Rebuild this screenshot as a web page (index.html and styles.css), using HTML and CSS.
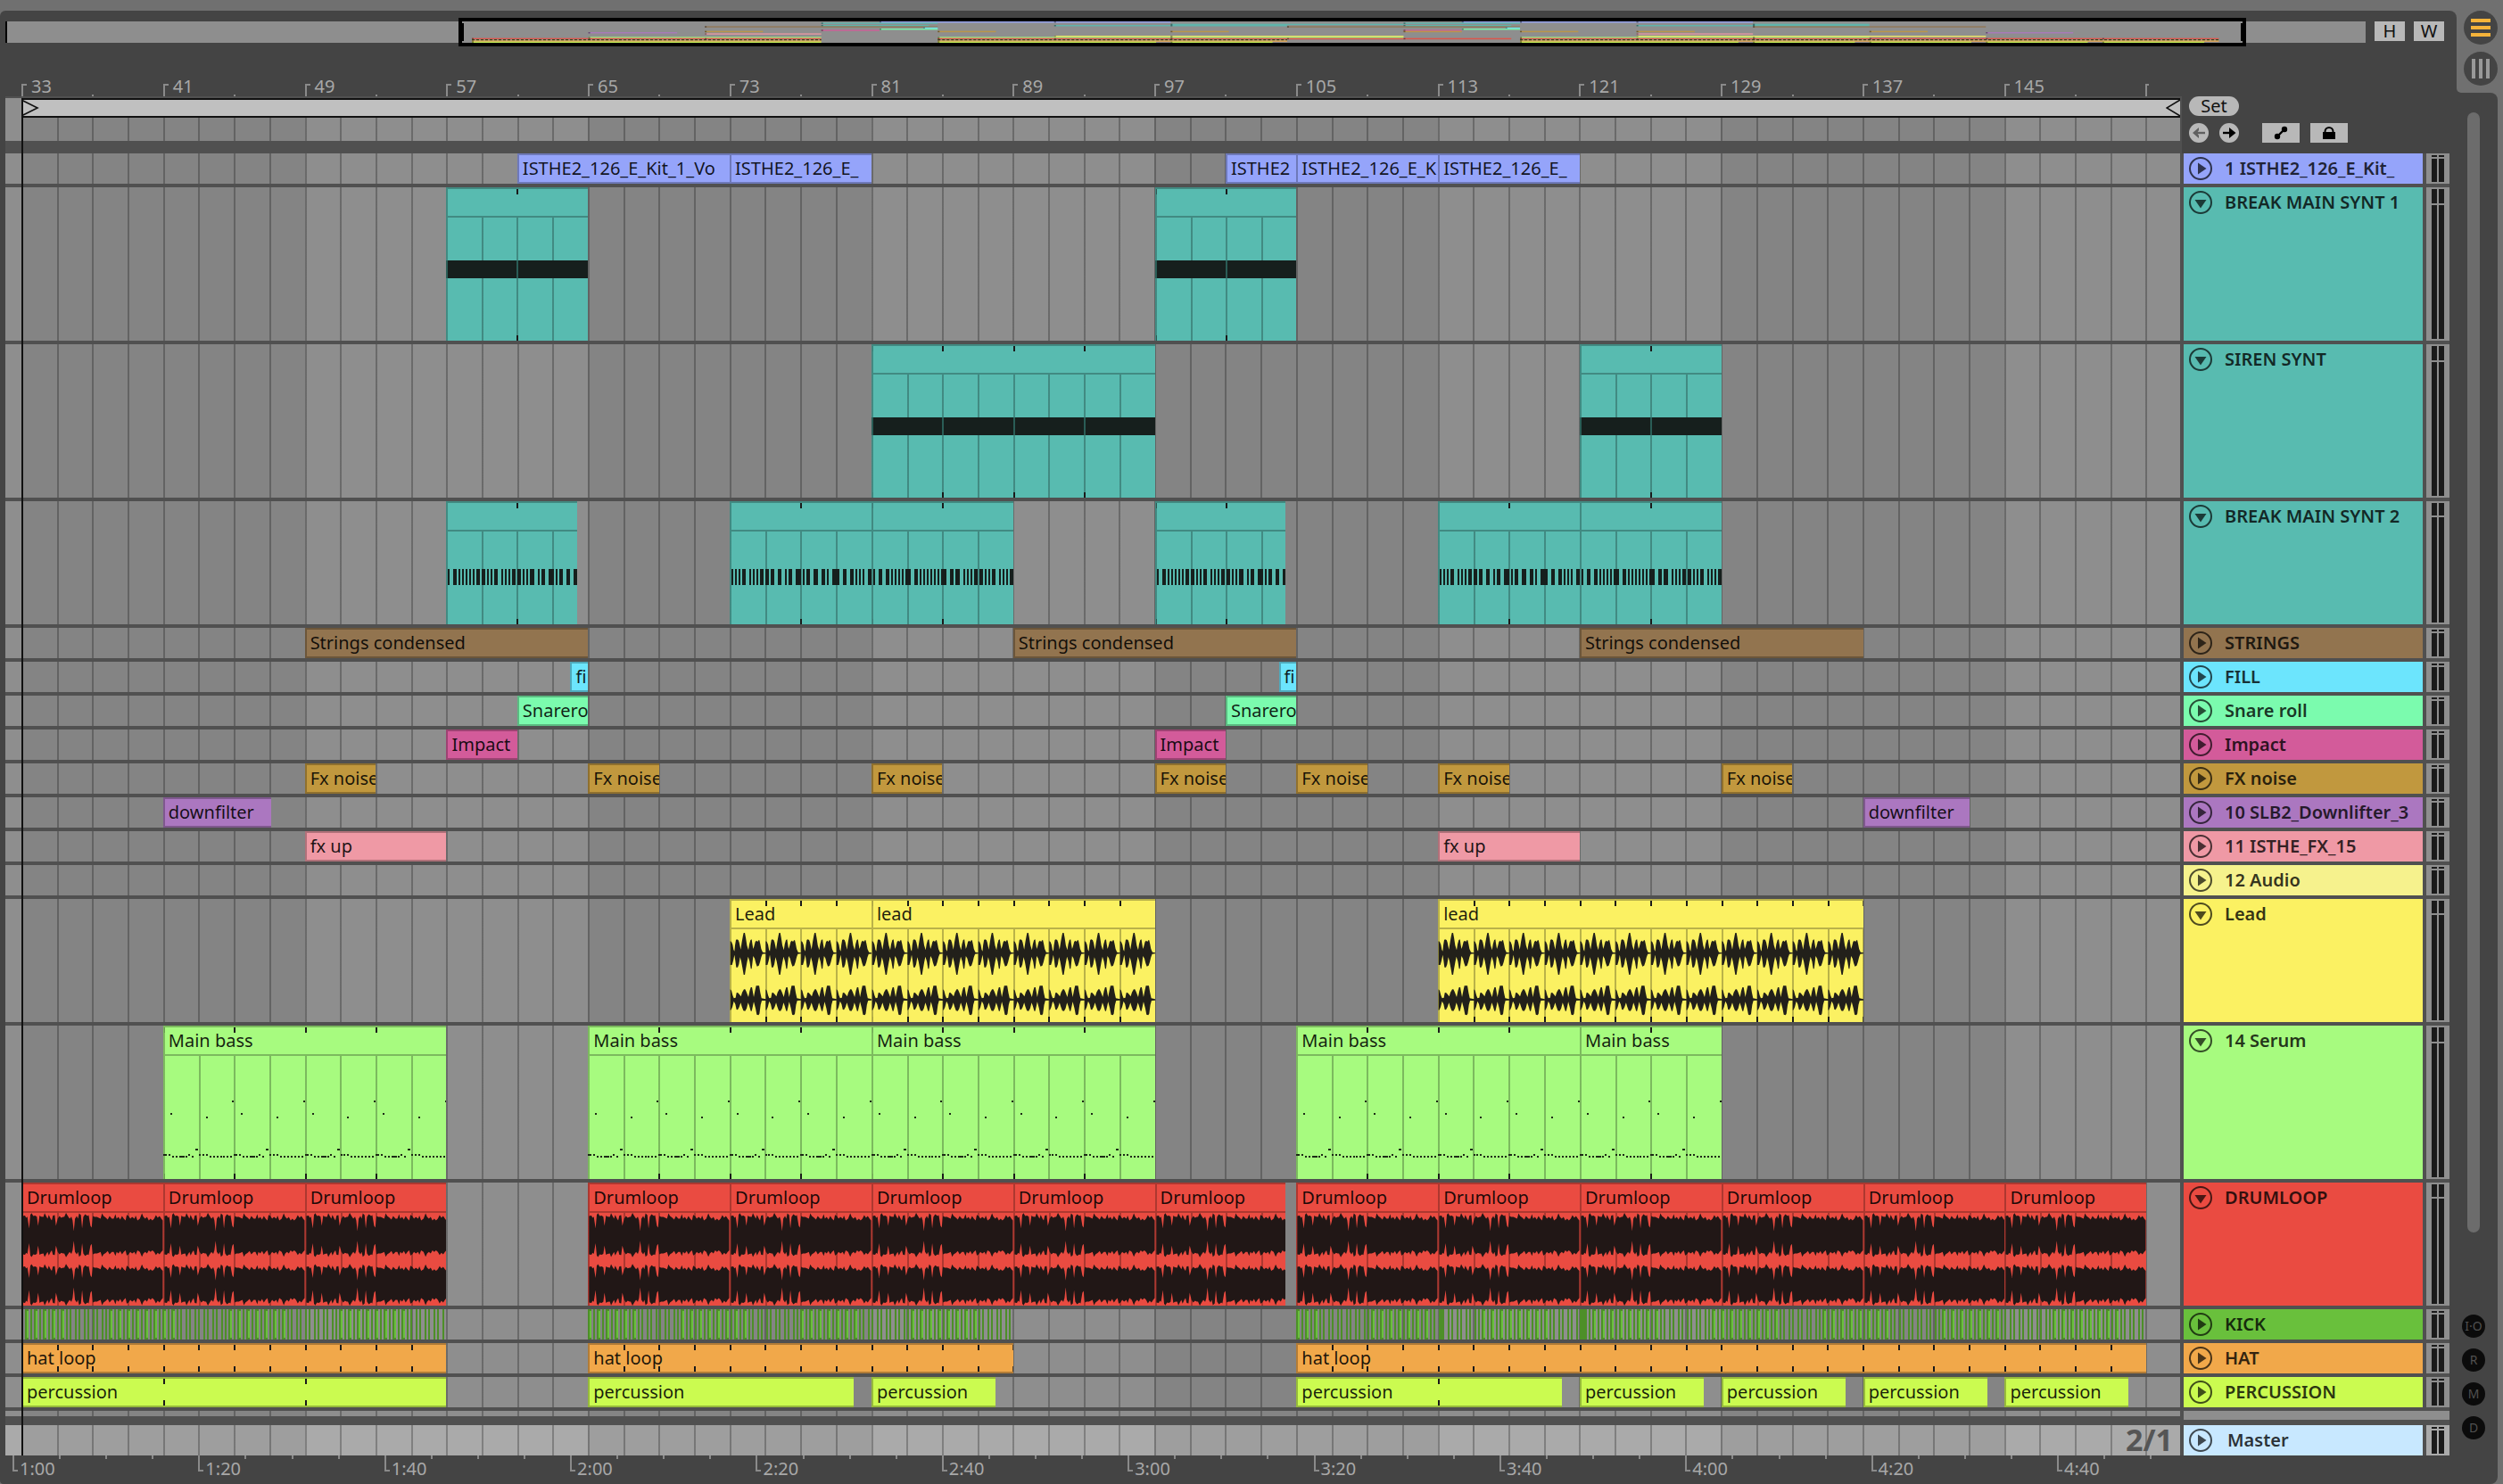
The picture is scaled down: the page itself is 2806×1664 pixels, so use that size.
FILE: index.html
```html
<!DOCTYPE html>
<html lang="en">
<head>
<meta charset="utf-8">
<title>Arrangement</title>
<meta name="viewport" content="width=device-width, initial-scale=1">
<link rel="stylesheet" href="styles.css">
</head>
<body>
<svg class="defs" width="0" height="0" aria-hidden="true">
  <symbol id="fold-closed" viewBox="0 0 26 26"><circle cx="13" cy="13" r="12" fill="none" stroke="currentColor" stroke-width="2"/><path d="M10 6.5 19.5 13 10 19.5z" fill="currentColor"/></symbol>
  <symbol id="fold-open" viewBox="0 0 26 26"><circle cx="13" cy="13" r="12" fill="none" stroke="currentColor" stroke-width="2"/><path d="M6.5 10h13L13 19.5z" fill="currentColor"/></symbol>
</svg>

<div class="app">
  <main class="workspace">
    <div class="overview-row">
      <div class="overview">
        <svg class="overview-map" viewBox="0 0 2644 24" preserveAspectRatio="none" aria-hidden="true"></svg>
        <div class="overview-frame"></div>
      </div>
      <button class="zoom-btn" type="button">H</button>
      <button class="zoom-btn" type="button">W</button>
    </div>

    <div class="bar-ruler">
      <span class="bar-mark">33</span><span class="bar-mark">41</span><span class="bar-mark">49</span><span class="bar-mark">57</span><span class="bar-mark">65</span><span class="bar-mark">73</span><span class="bar-mark">81</span><span class="bar-mark">89</span><span class="bar-mark">97</span><span class="bar-mark">105</span><span class="bar-mark">113</span><span class="bar-mark">121</span><span class="bar-mark">129</span><span class="bar-mark">137</span><span class="bar-mark">145</span><span class="bar-mark bar-mark-end"></span>
    </div>

    <div class="arrangement">
      <div class="head">
        <div class="locators">
          <div class="brace-row">
            <div class="brace">
              <svg width="20" height="18" viewBox="0 0 20 18"><path d="M0 0 18 9 0 18" fill="none" stroke="#111" stroke-width="1.6"/></svg>
              <svg width="16" height="18" viewBox="0 0 16 18"><path d="M16 0 1 9 16 18" fill="none" stroke="#111" stroke-width="1.6"/></svg>
            </div>
          </div>
          <div class="lane locator-lane"></div>
        </div>
        <div class="controls">
          <button class="set-btn" type="button">Set</button>
          <div class="control-row">
            <button class="nav-btn nav-btn-off" type="button" aria-label="Previous locator"><svg width="22" height="22" viewBox="0 0 22 22"><path d="M18 11H7" stroke="currentColor" stroke-width="2.4"/><path d="M4 11 11 5v3l-2 3 2 3v3z" fill="currentColor"/></svg></button>
            <button class="nav-btn" type="button" aria-label="Next locator"><svg width="22" height="22" viewBox="0 0 22 22"><path d="M4 11h11" stroke="currentColor" stroke-width="2.4"/><path d="M18.500 11 11 5v12z" fill="currentColor"/></svg></button>
            <button class="tool-btn tool-btn-first" type="button" aria-label="Automation"><svg width="42" height="22" viewBox="0 0 42 22"><path d="M17 15 25 7" stroke="#000" stroke-width="2.4"/><circle cx="17" cy="15" r="3.200"/><circle cx="25" cy="7" r="3.200"/></svg></button>
            <button class="tool-btn" type="button" aria-label="Lock envelopes"><svg width="42" height="22" viewBox="0 0 42 22"><path d="M14 10h14v8H14z"/><path d="M16.500 11V9.500a4.500 4.500 0 0 1 9 0V11" fill="none" stroke="#000" stroke-width="2"/></svg></button>
          </div>
        </div>
      </div>

      <div class="tracks">
        <section class="track periwinkle">
          <div class="lane">
            <div class="clip" style="--s:61;--e:73"><span>ISTHE2_126_E_Kit_1_Vo</span></div>
            <div class="clip" style="--s:73;--e:81"><span>ISTHE2_126_E_</span></div>
            <div class="clip" style="--s:101;--e:105"><span>ISTHE2</span></div>
            <div class="clip" style="--s:105;--e:113"><span>ISTHE2_126_E_K</span></div>
            <div class="clip" style="--s:113;--e:121"><span>ISTHE2_126_E_</span></div>
          </div>
          <header class="title"><button class="fold" type="button" aria-label="Unfold track"><svg><use href="#fold-closed"/></svg></button><h2>1 ISTHE2_126_E_Kit_</h2></header>
          <div class="meter"></div>
        </section>

        <section class="track large teal">
          <div class="lane">
            <div class="clip loop-4" style="--s:57;--e:65"><span></span><div class="body sustain"></div></div>
            <div class="clip loop-4" style="--s:97;--e:105"><span></span><div class="body sustain"></div></div>
          </div>
          <header class="title"><button class="fold" type="button" aria-label="Fold track"><svg><use href="#fold-open"/></svg></button><h2>BREAK MAIN SYNT 1</h2></header>
          <div class="meter"></div>
        </section>

        <section class="track large teal">
          <div class="lane">
            <div class="clip loop-4" style="--s:81;--e:97"><span></span><div class="body sustain"></div></div>
            <div class="clip loop-4" style="--s:121;--e:129"><span></span><div class="body sustain"></div></div>
          </div>
          <header class="title"><button class="fold" type="button" aria-label="Fold track"><svg><use href="#fold-open"/></svg></button><h2>SIREN SYNT</h2></header>
          <div class="meter"></div>
        </section>

        <section class="track medium teal">
          <div class="lane">
            <div class="clip loop-4" style="--s:57;--e:64.4"><span></span><div class="body" data-draw="riff" data-riff="0"></div></div>
            <div class="clip loop-4" style="--s:73;--e:81"><span></span><div class="body" data-draw="riff" data-riff="1"></div></div>
            <div class="clip loop-4" style="--s:81;--e:89"><span></span><div class="body" data-draw="riff" data-riff="2"></div></div>
            <div class="clip loop-4" style="--s:97;--e:104.4"><span></span><div class="body" data-draw="riff" data-riff="0"></div></div>
            <div class="clip loop-4" style="--s:113;--e:121"><span></span><div class="body" data-draw="riff" data-riff="1"></div></div>
            <div class="clip loop-4" style="--s:121;--e:129"><span></span><div class="body" data-draw="riff" data-riff="2"></div></div>
          </div>
          <header class="title"><button class="fold" type="button" aria-label="Fold track"><svg><use href="#fold-open"/></svg></button><h2>BREAK MAIN SYNT 2</h2></header>
          <div class="meter"></div>
        </section>

        <section class="track brown">
          <div class="lane">
            <div class="clip" style="--s:49;--e:65"><span>Strings condensed</span></div>
            <div class="clip" style="--s:89;--e:105"><span>Strings condensed</span></div>
            <div class="clip" style="--s:121;--e:137"><span>Strings condensed</span></div>
          </div>
          <header class="title"><button class="fold" type="button" aria-label="Unfold track"><svg><use href="#fold-closed"/></svg></button><h2>STRINGS</h2></header>
          <div class="meter"></div>
        </section>

        <section class="track cyan">
          <div class="lane">
            <div class="clip" style="--s:64;--e:65"><span>fi</span></div>
            <div class="clip" style="--s:104;--e:105"><span>fi</span></div>
          </div>
          <header class="title"><button class="fold" type="button" aria-label="Unfold track"><svg><use href="#fold-closed"/></svg></button><h2>FILL</h2></header>
          <div class="meter"></div>
        </section>

        <section class="track mint">
          <div class="lane">
            <div class="clip" style="--s:61;--e:65"><span>Snarero</span></div>
            <div class="clip" style="--s:101;--e:105"><span>Snarero</span></div>
          </div>
          <header class="title"><button class="fold" type="button" aria-label="Unfold track"><svg><use href="#fold-closed"/></svg></button><h2>Snare roll</h2></header>
          <div class="meter"></div>
        </section>

        <section class="track magenta">
          <div class="lane">
            <div class="clip" style="--s:57;--e:61"><span>Impact</span></div>
            <div class="clip" style="--s:97;--e:101"><span>Impact</span></div>
          </div>
          <header class="title"><button class="fold" type="button" aria-label="Unfold track"><svg><use href="#fold-closed"/></svg></button><h2>Impact</h2></header>
          <div class="meter"></div>
        </section>

        <section class="track gold">
          <div class="lane">
            <div class="clip" style="--s:49;--e:53"><span>Fx noise</span></div>
            <div class="clip" style="--s:65;--e:69"><span>Fx noise</span></div>
            <div class="clip" style="--s:81;--e:85"><span>Fx noise</span></div>
            <div class="clip" style="--s:97;--e:101"><span>Fx noise</span></div>
            <div class="clip" style="--s:105;--e:109"><span>Fx noise</span></div>
            <div class="clip" style="--s:113;--e:117"><span>Fx noise</span></div>
            <div class="clip" style="--s:129;--e:133"><span>Fx noise</span></div>
          </div>
          <header class="title"><button class="fold" type="button" aria-label="Unfold track"><svg><use href="#fold-closed"/></svg></button><h2>FX noise</h2></header>
          <div class="meter"></div>
        </section>

        <section class="track purple">
          <div class="lane">
            <div class="clip" style="--s:41;--e:47.100"><span>downfilter</span></div>
            <div class="clip" style="--s:137;--e:143"><span>downfilter</span></div>
          </div>
          <header class="title"><button class="fold" type="button" aria-label="Unfold track"><svg><use href="#fold-closed"/></svg></button><h2>10 SLB2_Downlifter_3</h2></header>
          <div class="meter"></div>
        </section>

        <section class="track pink">
          <div class="lane">
            <div class="clip" style="--s:49;--e:57"><span>fx up</span></div>
            <div class="clip" style="--s:113;--e:121"><span>fx up</span></div>
          </div>
          <header class="title"><button class="fold" type="button" aria-label="Unfold track"><svg><use href="#fold-closed"/></svg></button><h2>11 ISTHE_FX_15</h2></header>
          <div class="meter"></div>
        </section>

        <section class="track cream">
          <div class="lane"></div>
          <header class="title"><button class="fold" type="button" aria-label="Unfold track"><svg><use href="#fold-closed"/></svg></button><h2>12 Audio</h2></header>
          <div class="meter"></div>
        </section>

        <section class="track medium yellow">
          <div class="lane">
            <div class="clip loop-2" style="--s:73;--e:81"><span>Lead</span><div class="body" data-draw="lead"></div></div>
            <div class="clip loop-2" style="--s:81;--e:97"><span>lead</span><div class="body" data-draw="lead"></div></div>
            <div class="clip loop-2" style="--s:113;--e:137"><span>lead</span><div class="body" data-draw="lead"></div></div>
          </div>
          <header class="title"><button class="fold" type="button" aria-label="Fold track"><svg><use href="#fold-open"/></svg></button><h2>Lead</h2></header>
          <div class="meter"></div>
        </section>

        <section class="track large green">
          <div class="lane">
            <div class="clip loop-4" style="--s:41;--e:57"><span>Main bass</span><div class="body" data-draw="bass"></div></div>
            <div class="clip loop-4" style="--s:65;--e:81"><span>Main bass</span><div class="body" data-draw="bass"></div></div>
            <div class="clip loop-4" style="--s:81;--e:97"><span>Main bass</span><div class="body" data-draw="bass"></div></div>
            <div class="clip loop-4" style="--s:105;--e:121"><span>Main bass</span><div class="body" data-draw="bass"></div></div>
            <div class="clip loop-4" style="--s:121;--e:129"><span>Main bass</span><div class="body" data-draw="bass"></div></div>
          </div>
          <header class="title"><button class="fold" type="button" aria-label="Fold track"><svg><use href="#fold-open"/></svg></button><h2>14 Serum</h2></header>
          <div class="meter"></div>
        </section>

        <section class="track medium red">
          <div class="lane">
            <div class="clip" style="--s:33;--e:41"><span>Drumloop</span><div class="body" data-draw="drums"></div></div>
            <div class="clip" style="--s:41;--e:49"><span>Drumloop</span><div class="body" data-draw="drums"></div></div>
            <div class="clip" style="--s:49;--e:57"><span>Drumloop</span><div class="body" data-draw="drums"></div></div>
            <div class="clip" style="--s:65;--e:73"><span>Drumloop</span><div class="body" data-draw="drums"></div></div>
            <div class="clip" style="--s:73;--e:81"><span>Drumloop</span><div class="body" data-draw="drums"></div></div>
            <div class="clip" style="--s:81;--e:89"><span>Drumloop</span><div class="body" data-draw="drums"></div></div>
            <div class="clip" style="--s:89;--e:97"><span>Drumloop</span><div class="body" data-draw="drums"></div></div>
            <div class="clip" style="--s:97;--e:104.4"><span>Drumloop</span><div class="body" data-draw="drums"></div></div>
            <div class="clip" style="--s:105;--e:113"><span>Drumloop</span><div class="body" data-draw="drums"></div></div>
            <div class="clip" style="--s:113;--e:121"><span>Drumloop</span><div class="body" data-draw="drums"></div></div>
            <div class="clip" style="--s:121;--e:129"><span>Drumloop</span><div class="body" data-draw="drums"></div></div>
            <div class="clip" style="--s:129;--e:137"><span>Drumloop</span><div class="body" data-draw="drums"></div></div>
            <div class="clip" style="--s:137;--e:145"><span>Drumloop</span><div class="body" data-draw="drums"></div></div>
            <div class="clip" style="--s:145;--e:153"><span>Drumloop</span><div class="body" data-draw="drums"></div></div>
          </div>
          <header class="title"><button class="fold" type="button" aria-label="Fold track"><svg><use href="#fold-open"/></svg></button><h2>DRUMLOOP</h2></header>
          <div class="meter"></div>
        </section>

        <section class="track leaf">
          <div class="lane">
            <div class="kicks" style="--s:33;--e:57"></div>
            <div class="kicks" style="--s:65;--e:89"></div>
            <div class="kicks" style="--s:105;--e:153"></div>
          </div>
          <header class="title"><button class="fold" type="button" aria-label="Unfold track"><svg><use href="#fold-closed"/></svg></button><h2>KICK</h2></header>
          <div class="meter"></div>
        </section>

        <section class="track orange">
          <div class="lane">
            <div class="clip loop-2" style="--s:33;--e:57"><span>hat loop</span></div>
            <div class="clip loop-2" style="--s:65;--e:89"><span>hat loop</span></div>
            <div class="clip loop-2" style="--s:105;--e:153"><span>hat loop</span></div>
          </div>
          <header class="title"><button class="fold" type="button" aria-label="Unfold track"><svg><use href="#fold-closed"/></svg></button><h2>HAT</h2></header>
          <div class="meter"></div>
        </section>

        <section class="track lime">
          <div class="lane">
            <div class="clip loop-8" style="--s:33;--e:57"><span>percussion</span></div>
            <div class="clip" style="--s:65;--e:80"><span>percussion</span></div>
            <div class="clip" style="--s:81;--e:88"><span>percussion</span></div>
            <div class="clip loop-8" style="--s:105;--e:120"><span>percussion</span></div>
            <div class="clip" style="--s:121;--e:128"><span>percussion</span></div>
            <div class="clip" style="--s:129;--e:136"><span>percussion</span></div>
            <div class="clip" style="--s:137;--e:144"><span>percussion</span></div>
            <div class="clip" style="--s:145;--e:152"><span>percussion</span></div>
          </div>
          <header class="title"><button class="fold" type="button" aria-label="Unfold track"><svg><use href="#fold-closed"/></svg></button><h2>PERCUSSION</h2></header>
          <div class="meter"></div>
        </section>

        <div class="drop-area"><div class="lane"></div><div class="drop-side"></div></div>

        <section class="track master">
          <div class="lane"><span class="grid-size">2/1</span></div>
          <header class="title"><button class="fold" type="button" aria-label="Unfold track"><svg><use href="#fold-closed"/></svg></button><h2>Master</h2></header>
          <div class="meter"></div>
        </section>
      </div>
      <div class="playhead"></div>
    </div>

    <div class="time-ruler">
      <span class="time-mark">1:00</span><span class="time-mark">1:20</span><span class="time-mark">1:40</span><span class="time-mark">2:00</span><span class="time-mark">2:20</span><span class="time-mark">2:40</span><span class="time-mark">3:00</span><span class="time-mark">3:20</span><span class="time-mark">3:40</span><span class="time-mark">4:00</span><span class="time-mark">4:20</span><span class="time-mark">4:40</span>
    </div>
  </main>

  <aside class="rail">
    <div class="views-wrap">
      <nav class="views">
        <button class="view-btn view-btn-on" type="button" aria-label="Arrangement view"><svg width="38" height="38" viewBox="0 0 38 38"><path d="M8 9h22v4H8zM8 17h22v4H8zM8 25h22v4H8z" fill="currentColor"/></svg></button>
        <button class="view-btn" type="button" aria-label="Session view"><svg width="38" height="38" viewBox="0 0 38 38"><path d="M9 8h4v22H9zM17 8h4v22h-4zM25 8h4v22h-4z" fill="currentColor"/></svg></button>
      </nav>
    </div>
    <div class="rail-body">
      <div class="scroll-thumb"></div>
      <div class="sections">
        <button class="section-btn" type="button">I·O</button>
        <button class="section-btn" type="button">R</button>
        <button class="section-btn" type="button">M</button>
        <button class="section-btn" type="button">D</button>
      </div>
    </div>
  </aside>
</div>
<script src="script.js"></script>
</body>
</html>
```

FILE: styles.css
```css
* { box-sizing: border-box; }

:root {
  --panel: #444;
  --gap-bg: #505050;
  --lane: #8e8e8e;
  --lane-alt: #848484;
  --frame: #707070;
  --ink: #1a1a1a;
  --tick: #8a8a8a;
}

body {
  margin: 0;
  background: var(--frame);
  color: #111;
  font: 20px/28px "Noto Sans", "Open Sans", sans-serif;
}

button { margin: 0; padding: 0; border: 0; font: inherit; color: inherit; }
button svg { display: block; }
.defs { position: absolute; }

.app { display: flex; min-height: 100vh; padding-top: 12px; }

.workspace {
  flex: 1;
  min-width: 0;
  padding: 12px 8px 0 6px;
  background: var(--panel);
  border-radius: 6px 8px 0 4px;
}

/* Overview strip */
.overview-row { display: flex; gap: 10px; padding-right: 6px; }
.overview { position: relative; flex: 1; height: 24px; background: var(--lane); border-left: 2px solid #000; }
.overview-map { display: block; width: 100%; height: 24px; }
.overview-frame { position: absolute; inset: -4px 5.05% -4px 19.15%; border: 4px solid #000; }
.overview-frame::before { content: ""; position: absolute; inset: 2px 0; border: solid #000; border-width: 0 2px; }
.zoom-btn { width: 34px; height: 22px; background: #b8b8b8; line-height: 22px; }

/* Bar ruler */
.bar-ruler {
  display: flex;
  height: 60px;
  margin-right: 302px;
  padding-left: 18px;
  overflow: hidden;
  background: repeating-linear-gradient(90deg, var(--tick) 0 2px, transparent 2px calc(400% / 121.945)) left bottom / 100% 2px no-repeat content-box;
  background-origin: content-box;
}
.bar-mark {
  flex: 0 0 calc(800% / 121.945);
  display: flex;
  align-items: flex-end;
  gap: 5px;
  line-height: 22px;
  color: #a8a8a8;
}
.bar-mark::before { content: ""; width: 4px; height: 12px; border: solid var(--tick); border-width: 2px 0 0 2px; }
.bar-mark-end::before { width: 2px; }

/* Locators and controls */
.arrangement { position: relative; }
.head, .track { display: grid; grid-template-columns: minmax(0, 1fr) 268px 26px; column-gap: 4px; }
.locators { background: var(--gap-bg); margin-right: -2px; padding: 2px 2px 14px 0; }
.brace-row { padding-left: 18px; background: var(--lane); }
.brace { display: flex; justify-content: space-between; height: 22px; background: #c0c0c0; border: solid #111; border-width: 2px 0; }
.controls { padding-left: 6px; display: flex; flex-direction: column; align-items: flex-start; gap: 8px; }
.set-btn { width: 56px; height: 22px; border-radius: 11px; background: #b8b8b8; line-height: 22px; }
.control-row { display: flex; gap: 12px; }
.nav-btn { width: 22px; height: 22px; border-radius: 50%; background: #b8b8b8; color: #000; }
.nav-btn-off { color: #606060; }
.tool-btn { width: 42px; height: 22px; background: #b8b8b8; }
.tool-btn-first { margin-left: 14px; }

/* Tracks */
.tracks { display: grid; row-gap: 4px; background: var(--gap-bg); }
.track { --h: 34px; --peak: 2px; height: var(--h); }
.medium { --h: 138px; --peak: 14px; }
.large { --h: 172px; --peak: 16px; }

.lane {
  container-type: inline-size;
  display: grid;
  grid-template-columns: repeat(1219, minmax(0, 1fr));
  grid-template-rows: 100%;
  min-width: 0;
  padding-left: 18px;
  overflow: hidden;
  background:
    repeating-linear-gradient(90deg, #00000040 0 2px, transparent 2px calc(200% / 121.945)),
    repeating-linear-gradient(90deg, var(--lane-alt) 0 calc(1600% / 121.945), var(--lane) calc(1600% / 121.945) calc(3200% / 121.945));
  background-origin: content-box;
  background-repeat: no-repeat;
  background-color: var(--lane);
}
.locator-lane { height: 26px; }

.title { display: flex; align-items: flex-start; gap: 14px; min-width: 0; padding: 4px 0 0 6px; background: var(--c); overflow: hidden; }
.title h2 { margin: 0; font-size: 20px; font-weight: 600; line-height: 26px; white-space: nowrap; color: #000000cc; }
.fold { flex: none; background: none; color: #000000b0; }
.fold svg { width: 26px; height: 26px; }

.meter { display: flex; gap: 2px; padding: 2px 6px; background: var(--lane); }
.meter::before, .meter::after {
  content: "";
  width: 6px;
  background: linear-gradient(var(--ink) 0 var(--peak), transparent var(--peak) calc(var(--peak) + 2px), var(--ink) calc(var(--peak) + 2px));
}

/* Clips */
.clip, .kicks {
  --bar: calc(100cqw / 121.945);
  --edge: color-mix(in srgb, var(--c) 74%, black);
  grid-row: 1;
  grid-column: calc((var(--s) - 33) * 10 + 1) / calc((var(--e) - 33) * 10 + 1);
  min-width: 0;
  overflow: hidden;
}
.clip {
  border: solid var(--edge);
  border-width: 2px 0 2px 2px;
  background-color: var(--c);
  background-clip: padding-box;
}
.clip > span { display: block; height: 30px; padding-left: 4px; line-height: 30px; white-space: nowrap; overflow: hidden; color: #000000e0; }
.medium .clip, .large .clip { display: flex; flex-direction: column; border-width: 2px 0 0; }
.medium .clip > span, .large .clip > span { flex: none; height: 32px; border: solid var(--edge); border-width: 0 0 2px 2px; }

.loop-2 { --loop: calc(var(--bar) * 2); }
.loop-4 { --loop: calc(var(--bar) * 4); }
.loop-8 { --loop: calc(var(--bar) * 8); }
.loop-2, .loop-4, .loop-8 { position: relative; }
.loop-2::after, .loop-4::after, .loop-8::after {
  content: "";
  position: absolute;
  inset: 0 0 0 -2px;
  background:
    repeating-linear-gradient(90deg, var(--ink) 0 2px, transparent 2px var(--loop)) left top / 100% 6px no-repeat,
    repeating-linear-gradient(90deg, var(--ink) 0 2px, transparent 2px var(--loop)) left bottom / 100% 6px no-repeat;
  clip-path: inset(0 0 0 2px);
}
.medium .clip::after, .large .clip::after { left: 0; }

.body {
  flex: 1;
  overflow: hidden;
  background: repeating-linear-gradient(90deg, var(--edge) 0 2px, transparent 2px calc(var(--bar) * 2));
}
.body svg, .kicks svg { display: block; height: 100%; }
.sustain {
  background:
    repeating-linear-gradient(90deg, #2a5d56 0 2px, transparent 2px calc(var(--bar) * 4)) 0 48px / 100% 20px no-repeat,
    linear-gradient(#161f1d, #161f1d) 0 48px / 100% 20px no-repeat,
    repeating-linear-gradient(90deg, var(--edge) 0 2px, transparent 2px calc(var(--bar) * 2));
}

.periwinkle { --c: #95a4fa; }
.teal { --c: #58bbb0; }
.brown { --c: #92744f; }
.cyan { --c: #6ce5fd; }
.mint { --c: #7bfbae; }
.magenta { --c: #d35b9a; }
.gold { --c: #c1983e; }
.purple { --c: #ab77c0; }
.pink { --c: #ef99a5; }
.cream { --c: #f6f28d; }
.yellow { --c: #fbf162; }
.green { --c: #a7fb7f; }
.red { --c: #ea4b41; }
.leaf { --c: #69c03c; }
.orange { --c: #f1a84a; }
.lime { --c: #cbfb50; }
.master { --c: #c8e8ff; --lane: #aaa; --lane-alt: #9e9e9e; }
.master .title { gap: 17px; }

.drop-area { display: grid; grid-template-columns: minmax(0, 1fr) 298px; column-gap: 4px; margin-bottom: 2px; }
.drop-area .lane { height: 6px; }
.drop-side { height: 10px; background: var(--lane); }

.grid-size { grid-column: 1 / -1; justify-self: end; padding-right: 8px; font-size: 34px; font-weight: 700; line-height: 32px; color: #555; }

.playhead { position: absolute; top: 2px; bottom: 0; left: 18px; width: 2px; background: #111; }

/* Time ruler */
.time-ruler {
  display: flex;
  height: 32px;
  margin-right: 302px;
  padding-left: 8px;
  overflow: hidden;
  background: repeating-linear-gradient(90deg, var(--tick) 0 2px, transparent 2px calc(100% / 46.648)) left top / 100% 4px no-repeat content-box;
  background-origin: content-box;
}
.time-mark { flex: 0 0 calc(100% / 11.662); display: flex; gap: 2px; line-height: 30px; color: #a8a8a8; }
.time-mark::before { content: ""; flex: none; width: 4px; height: 16px; border: solid var(--tick); border-width: 0 0 2px 2px; }

/* Right rail */
.rail { flex: none; width: 52px; display: flex; flex-direction: column; }
.views-wrap { background: linear-gradient(90deg, var(--panel) 8px, var(--frame) 8px); }
.views { height: 92px; padding-left: 8px; display: flex; flex-direction: column; gap: 8px; background: var(--frame); border-bottom-left-radius: 5px; }
.view-btn { width: 38px; height: 38px; border-radius: 50%; background: var(--panel); color: #999; }
.view-btn-on { color: #f5b33a; }
.rail-body { flex: 1; display: flex; flex-direction: column; width: 46px; padding: 22px 14px 50px 6px; background: var(--panel); border-radius: 0 8px 8px 0; }
.scroll-thumb { flex: 1; max-height: 1256px; width: 14px; margin: 0 6px; border-radius: 7px; background: #6c6c6c; }
.sections { display: grid; gap: 12px; margin-top: auto; }
.section-btn { width: 26px; height: 26px; border-radius: 50%; background: #0b0b0b; color: #505050; font-size: 14px; line-height: 26px; text-align: center; }
```

FILE: script.js
```js
const NS = 'http://www.w3.org/2000/svg';
const VISIBLE_BARS = 121.945;

function el(name, attrs, parent) {
  const node = document.createElementNS(NS, name);
  for (const key in attrs) node.setAttribute(key, attrs[key]);
  if (parent) parent.append(node);
  return node;
}

const span = node => ({
  start: parseFloat(node.style.getPropertyValue('--s')),
  end: parseFloat(node.style.getPropertyValue('--e'))
});

/* Lead: two channels, one phrase is 119 units wide (two bars) and the body is 312 units high. */
const LEAD = [
  [[0,40],[4,42],[8,52],[11,68],[14,74],[16,54],[19,36],[22,34],[27,36],[30,44],[35,68],[39,42],[43,20],[45,12],[49,12],[52,28],[56,54],[61,70],[64,50],[68,36],[72,34],[74,48],[77,66],[80,58],[84,42],[88,38],[92,42],[95,37],[98,37],[101,50],[104,66],[109,77],[119,79],
   [119,82],[108,83],[104,94],[100,110],[96,122],[90,125],[86,114],[82,98],[77,90],[74,116],[72,133],[69,133],[65,108],[60,92],[56,112],[52,134],[49,153],[45,153],[41,130],[37,108],[33,94],[29,118],[25,128],[20,128],[17,106],[14,86],[10,106],[6,120],[0,120]],
  [[0,202],[4,206],[8,222],[12,232],[18,230],[21,214],[25,213],[30,218],[36,226],[40,212],[46,202],[50,202],[54,210],[61,228],[65,208],[69,195],[73,195],[79,228],[83,208],[87,190],[97,190],[101,214],[105,232],[119,235],
   [119,239],[106,240],[102,254],[98,284],[95,289],[89,287],[85,266],[79,244],[76,258],[72,275],[69,275],[64,258],[60,247],[55,266],[50,275],[44,274],[39,260],[35,247],[30,262],[25,271],[21,270],[17,252],[12,242],[7,262],[3,271],[0,272]]
];

/* Drum loop: upper envelope, 471 units wide (eight bars). */
const DRUMS = [0,18,8,15,12,28,16,21,22,58,26,11,30,1,36,18,42,15,48,21,52,48,57,15,62,21,70,23,74,1,79,18,84,33,88,11,94,33,98,43,102,15,108,13,112,48,118,33,124,17,130,28,136,23,140,23,146,0,152,18,158,33,164,21,168,43,172,68,176,33,182,18,186,33,190,3,196,13,200,58,204,23,210,8,218,18,222,13,228,48,232,55,236,18,242,23,250,23,256,28,262,33,267,3,272,18,280,28,286,38,292,18,300,33,306,33,312,8,316,33,322,23,328,38,334,18,340,33,346,43,350,11,356,18,362,33,368,23,376,33,380,15,386,43,394,33,401,3,406,23,412,33,418,23,424,43,430,33,436,43,442,33,448,13,454,28,460,18,466,33,471,43];

/* Note cells of the synth riffs, 79 cells to eight bars. */
const RIFFS = [
  [0,3,4,6,8,10,12,14,16,17,19,20,22,24,26,27,30,32,34,36,37,39,40,42,44,46,47,50,52,53,56,57,58,60,62,63,66,67,70,71],
  [0,2,4,6,7,10,12,14,16,17,19,20,22,23,26,27,30,32,33,36,37,38,40,42,43,46,47,50,51,53,56,57,58,59,62,63,66,67,69,71,73,76,77],
  [0,3,4,7,8,10,12,14,16,18,19,20,23,24,26,28,30,32,34,36,38,39,40,43,44,46,47,50,52,54,56,57,59,60,62,64,66,67,70,72,74,76,77]
];

/* Bass notes as [x, y, width] in a four-bar phrase 80 units wide. */
const BASS = [[8,64,2],[48,68,2],[78,50,2],[36,104,3],[0,110,4],[6,110,2],[28,110,2],[40,110,2],[44,110,2],[48,110,2],
  [10,112,2],[14,112,2],[18,112,6],[25,112,2],[32,112,2],[52,112,2],[56,112,2],[60,112,2],[64,112,2],[68,112,2],[72,112,2],[76,112,2]];

const draw = {
  lead(svg, bars) {
    svg.setAttribute('viewBox', `0 0 ${bars * 59.5} 312`);
    let d = '';
    for (let x = 0; x < bars * 59.5; x += 119) {
      for (const shape of LEAD) d += 'M' + shape.map(p => `${p[0] + x + 2} ${p[1]}`).join('L') + 'z';
    }
    el('path', { d, fill: '#22201a' }, svg);
  },
  drums(svg, bars) {
    svg.setAttribute('viewBox', `0 0 ${bars * 59.5} 312`);
    const pts = [];
    for (let i = 0; i < DRUMS.length; i += 2) {
      const y = DRUMS[i + 1];
      pts.push([DRUMS[i] + 4, y > 44 ? y * 0.9 : y * 0.6]);
    }
    const ring = (a, b) => 'M' + pts.map(p => `${p[0]} ${a(p[1])}`).concat(pts.slice().reverse().map(p => `${p[0]} ${b(p[1])}`)).join('L') + 'z';
    const d = ring(y => y, y => 149 - y * 0.9) + ring(y => 172 + y * 0.9, y => 312 - y);
    el('path', { d, fill: '#211716' }, svg);
  },
  riff(svg, bars, body) {
    svg.setAttribute('viewBox', `0 0 ${bars * 9.875} 104`);
    const d = RIFFS[body.dataset.riff].map(c => `M${c + 1} 42h1v18h-1z`).join('');
    el('path', { d, fill: '#161f1d', 'shape-rendering': 'crispEdges' }, svg);
  },
  bass(svg, bars) {
    svg.setAttribute('viewBox', `0 0 ${bars * 20} 138`);
    let d = '';
    for (let x = 0; x < bars * 20; x += 80) {
      for (const n of BASS) d += `M${n[0] + x} ${n[1]}h${n[2]}v2h-${n[2]}z`;
    }
    el('path', { d, fill: '#1c2a16', 'shape-rendering': 'crispEdges' }, svg);
  }
};

document.querySelectorAll('.body[data-draw]').forEach(body => {
  const { start, end } = span(body.parentElement);
  const svg = el('svg', { width: '100%', preserveAspectRatio: 'none', 'aria-hidden': 'true' }, body);
  draw[body.dataset.draw](svg, end - start, body);
});

/* Every kick is a one-hit clip: a dark left edge, then whatever of its body fits the two-pixel raster. */
function drawKicks() {
  document.querySelectorAll('.kicks').forEach(box => {
    box.replaceChildren();
    const { start, end } = span(box);
    const bar = (box.parentElement.clientWidth - 18) / VISIBLE_BARS;
    const svg = el('svg', { width: '100%', 'shape-rendering': 'crispEdges', 'aria-hidden': 'true' }, box);
    const even = v => 2 * Math.floor(v / 2);
    const origin = even((start - 33) * bar + 0.75);
    let edges = '', fills = '';
    for (let n = 0; n < (end - start) * 4; n++) {
      const at = (start - 33) * bar + 0.75 + n * bar / 4;
      const x = even(at) - origin;
      const x2 = even(at + 2.6) - origin;
      edges += `M${x} 0h2v34h-2z`;
      if (x2 - x > 2) {
        edges += `M${x} 0h4v2h-4zM${x} 32h4v2h-4z`;
        fills += `M${x + 2} 2h2v30h-2z`;
      }
    }
    for (const extra of [113, 121]) {
      if (start === 105) edges += `M${even((extra - 33) * bar + 0.75) - origin} 0h6v34h-6z`;
    }
    el('path', { d: fills, fill: '#69c03c' }, svg);
    el('path', { d: edges, fill: '#4d8f28' }, svg);
  });
}
drawKicks();
window.addEventListener('resize', drawKicks);

/* Overview: every track is a thin row of the strip. */
const map = document.querySelector('.overview-map');
const rows = [...document.querySelectorAll('.track:not(.master)')];
rows.forEach((track, i) => {
  const color = getComputedStyle(track).getPropertyValue('--c').trim();
  const y = i * 24 / rows.length;
  track.querySelectorAll('.clip, .kicks').forEach(clip => {
    const { start, end } = span(clip);
    const x = 521 + (start - 33) * 16.32;
    const w = (end - start) * 16.32;
    if (clip.className === 'kicks') {
      el('path', { d: `M${x} ${y + 0.7}h${w}`, stroke: '#2d4a20', 'stroke-width': 1.4, 'stroke-dasharray': '3 2' }, map);
      return;
    }
    el('rect', { x, y, width: w, height: 1.5, fill: color, opacity: 0.85 }, map);
    el('rect', { x, y, width: 2, height: 1.5, fill: '#000', opacity: 0.4 }, map);
  });
});
```
